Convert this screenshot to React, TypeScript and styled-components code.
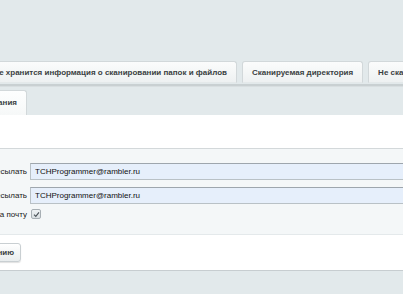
import React from "react";
import styled, { createGlobalStyle } from "styled-components";

const GlobalStyle = createGlobalStyle`
  html, body {
    margin: 0;
    padding: 0;
    background: #e2e9eb;
    overflow: hidden;
  }
`;

const SPage = styled.div`
  width: 403px;
  height: 294px;
  overflow: hidden;
  background: #e2e9eb;
  font-family: "Liberation Sans", Arial, sans-serif;
  color: #000;
  display: flex;
  flex-direction: column;
`;

const STabsRow = styled.div`
  margin-top: 61px;
  display: flex;
  gap: 5px;
  width: 403px;
  height: 21px;
`;

// first tab is wider than the viewport: its right edge sits at a fixed spot
const SFirstSlot = styled.div`
  width: 237px;
  flex-shrink: 0;
  display: flex;
  justify-content: flex-end;
`;

const STab = styled.div`
  height: 20px;
  padding: 0 9px;
  flex-shrink: 0;
  display: flex;
  align-items: center;
  white-space: nowrap;
  font-size: 8px;
  font-weight: bold;
  color: #3a3f42;
  background: linear-gradient(#fbfcfc, #eef1f2);
  border: 1px solid #d2d8da;
  border-bottom-color: #e4e9ea;
  border-radius: 3px 3px 0 0;
`;

const SDivider = styled.div`
  margin-top: 2px;
  height: 2px;
  background: #c9d0d2;
  border-bottom: 1px solid #d8dee0;
`;

const SSubRow = styled.div`
  height: 26px;
  display: flex;
  align-items: flex-end;
  justify-content: flex-end;
  width: 27px;
  overflow: visible;
  padding-top: 2px;
`;

const SSubTab = styled.div`
  height: 22px;
  padding: 0 9px 2px;
  display: flex;
  align-items: center;
  white-space: nowrap;
  flex-shrink: 0;
  font-size: 8px;
  font-weight: bold;
  color: #3a3f42;
  background: linear-gradient(#fdfefe, #f6f8f8);
  border: 1px solid #d2d8da;
  border-bottom: none;
  border-radius: 3px 3px 0 0;
`;

const SHeadPanel = styled.div`
  height: 33px;
  background: #fff;
  border-bottom: 1px solid #d3d8da;
`;

const SForm = styled.div`
  height: 86px;
  background: #f4f7f8;
  border-bottom: 1px solid #e4e9eb;
  padding-top: 14px;
  box-sizing: border-box;
  display: grid;
  grid-template-columns: 27px 1fr;
  column-gap: 3px;
  row-gap: 7px;
  align-content: start;
`;

const SLabel = styled.div<{ $shift?: number }>`
  display: flex;
  justify-content: flex-end;
  align-items: center;
  white-space: nowrap;
  font-size: 8px;
  color: #1a1a1a;
  margin-top: ${(p) => p.$shift ?? 0}px;
`;

const SInput = styled.input`
  height: 17px;
  box-sizing: border-box;
  margin: 0;
  padding: 0 4px;
  width: 420px;
  font-family: "Liberation Sans", Arial, sans-serif;
  font-size: 8px;
  color: #111;
  background: #e6effb;
  border: 1px solid #b9c1c6;
  border-top-color: #9ea6ad;
  border-right: none;
  outline: none;
`;

const SCheckWrap = styled.div`
  display: flex;
  align-items: center;
  padding-left: 1px;
  height: 12px;
  margin-top: -3px;
`;

const SCheck = styled.span`
  width: 10px;
  height: 10px;
  box-sizing: border-box;
  border: 1px solid #a7afb4;
  border-radius: 2px;
  background: linear-gradient(#eef2f4, #d9dfe2);
  display: flex;
  align-items: center;
  justify-content: center;
`;

const SFooterBar = styled.div`
  background: #fff;
  border-bottom: 1px solid #c7cdd0;
`;

const SFooter = styled.div`
  height: 35px;
  display: flex;
  align-items: center;
  width: 21px;
  justify-content: flex-end;
`;

const SButton = styled.button`
  flex-shrink: 0;
  height: 19px;
  margin: 0;
  padding: 0 6px;
  white-space: nowrap;
  font-family: "Liberation Sans", Arial, sans-serif;
  font-size: 8px;
  font-weight: bold;
  color: #3a3f42;
  background: linear-gradient(#ffffff, #e9edee);
  border: 1px solid #c9cfd2;
  border-radius: 3px;
  box-shadow: 0 1px 1px rgba(0, 0, 0, 0.12);
`;

const rows = ["Кому пересылать", "От кого пересылать"];

const App: React.FC = () => {
  return (
    <>
      <GlobalStyle />
      <SPage>
        <STabsRow>
          <SFirstSlot>
            <STab>Путь, где хранится информация о сканировании папок и файлов</STab>
          </SFirstSlot>
          <STab>Сканируемая директория</STab>
          <STab>Не сканируемые директории</STab>
        </STabsRow>
        <SDivider />
        <SSubRow>
          <SSubTab>Настройки сканирования</SSubTab>
        </SSubRow>
        <SHeadPanel />
        <SForm>
          {rows.map((label) => (
            <React.Fragment key={label}>
              <SLabel>{label}</SLabel>
              <SInput readOnly value="TCHProgrammer@rambler.ru" />
            </React.Fragment>
          ))}
          <SLabel $shift={-3}>Отправлять на почту</SLabel>
          <SCheckWrap>
            <SCheck>
              <svg width="7" height="7" viewBox="0 0 7 7">
                <path d="M1 3.6 L2.8 5.4 L6 1.4" fill="none" stroke="#4a5258" strokeWidth="1.1" />
              </svg>
            </SCheck>
          </SCheckWrap>
        </SForm>
        <SFooterBar>
          <SFooter>
            <SButton>По умолчанию</SButton>
          </SFooter>
        </SFooterBar>
      </SPage>
    </>
  );
};

export default App;
